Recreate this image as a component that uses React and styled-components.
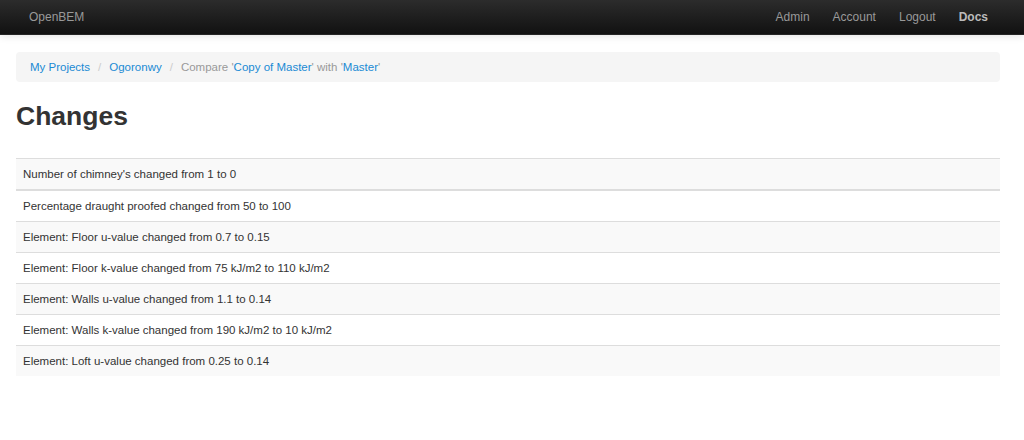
import React from 'react';
import styled, { createGlobalStyle } from 'styled-components';

const GlobalStyle = createGlobalStyle`
  body {
    margin: 0;
    background: #fff;
    font-family: "Liberation Sans", Arial, sans-serif;
    color: #333;
  }
`;

const Navbar = styled.div`
  height: 34px;
  background: linear-gradient(#2c2c2c, #111);
  border-bottom: 1px solid #252525;
  box-shadow: 0 1px 8px rgba(0, 0, 0, 0.12);
  display: flex;
  align-items: center;
  justify-content: space-between;
  padding: 0 36px 0 29px;
`;

const Brand = styled.span`
  color: #999;
  font-size: 12px;
`;

const NavLinks = styled.nav`
  display: flex;
  gap: 23px;
`;

const NavLink = styled.a`
  color: ${(p) => (p.strong ? '#bbb' : '#999')};
  font-weight: ${(p) => (p.strong ? 'bold' : 'normal')};
  font-size: 12px;
  text-decoration: none;
`;

const Container = styled.div`
  padding: 0 24px 0 16px;
`;

const Breadcrumb = styled.div`
  margin-top: 17px;
  height: 30px;
  background: #f5f5f5;
  border-radius: 4px;
  display: flex;
  align-items: center;
  padding: 0 14px;
  font-size: 11.5px;
  color: #999;
`;

const Crumb = styled.a`
  color: #1a8ad4;
  text-decoration: none;
`;

const Divider = styled.span`
  color: #ccc;
  padding: 0 8px;
`;

const Title = styled.h1`
  font-size: 26.5px;
  font-weight: bold;
  margin: 18px 0 0;
  line-height: 32px;
  color: #333;
`;

const Table = styled.div`
  margin-top: 26px;
`;

const Row = styled.div`
  background: ${(p) => (p.odd ? '#f9f9f9' : '#fff')};
  border-top: ${(p) => (p.first ? 2 : 1)}px solid #dddddd;
  padding: 8px 7px;
  font-size: 11.5px;
  line-height: 14px;
`;

const changes = [
  "Number of chimney's changed from 1 to 0",
  'Percentage draught proofed changed from 50 to 100',
  'Element: Floor u-value changed from 0.7 to 0.15',
  'Element: Floor k-value changed from 75 kJ/m2 to 110 kJ/m2',
  'Element: Walls u-value changed from 1.1 to 0.14',
  'Element: Walls k-value changed from 190 kJ/m2 to 10 kJ/m2',
  'Element: Loft u-value changed from 0.25 to 0.14',
];

const App = () => {
  return (
    <>
      <GlobalStyle />
      <Navbar>
        <Brand>OpenBEM</Brand>
        <NavLinks>
          <NavLink>Admin</NavLink>
          <NavLink>Account</NavLink>
          <NavLink>Logout</NavLink>
          <NavLink strong>Docs</NavLink>
        </NavLinks>
      </Navbar>
      <Container>
        <Breadcrumb>
          <Crumb>My Projects</Crumb>
          <Divider>/</Divider>
          <Crumb>Ogoronwy</Crumb>
          <Divider>/</Divider>
          <span>
            Compare '<Crumb>Copy of Master</Crumb>' with '<Crumb>Master</Crumb>'
          </span>
        </Breadcrumb>
        <Title>Changes</Title>
        <Table>
          {changes.map((c, i) => (
            <Row key={i} odd={i % 2 === 0} first={i === 1}>
              {c}
            </Row>
          ))}
        </Table>
      </Container>
    </>
  );
};

export default App;
